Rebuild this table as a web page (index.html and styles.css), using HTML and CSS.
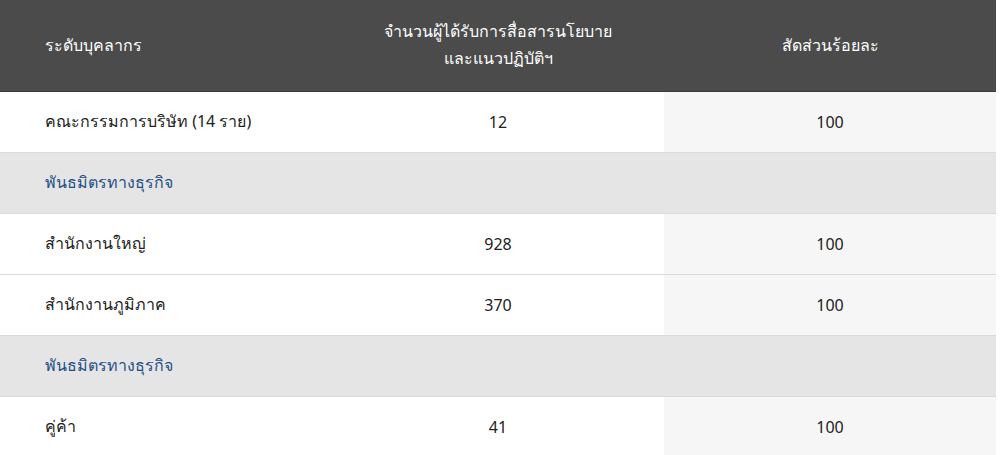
FILE: index.html
```html
<!DOCTYPE html>
<html lang="th">
<head>
<meta charset="utf-8">
<link rel="stylesheet" href="styles.css">
</head>
<body>
<table class="tbl">
  <colgroup>
    <col class="col">
    <col class="col">
    <col class="col">
  </colgroup>
  <thead>
    <tr>
      <th class="c1">ระดับบุคลากร</th>
      <th class="c2">จำนวนผู้ได้รับการสื่อสารนโยบาย<br>และแนวปฏิบัติฯ</th>
      <th class="c3">สัดส่วนร้อยละ</th>
    </tr>
  </thead>
  <tbody>
    <tr><td class="c1">คณะกรรมการบริษัท (14 ราย)</td><td class="c2">12</td><td class="c3">100</td></tr>
    <tr class="group"><td class="c1">พันธมิตรทางธุรกิจ</td><td></td><td></td></tr>
    <tr><td class="c1">สำนักงานใหญ่</td><td class="c2">928</td><td class="c3">100</td></tr>
    <tr><td class="c1">สำนักงานภูมิภาค</td><td class="c2">370</td><td class="c3">100</td></tr>
    <tr class="group"><td class="c1">พันธมิตรทางธุรกิจ</td><td></td><td></td></tr>
    <tr><td class="c1">คู่ค้า</td><td class="c2">41</td><td class="c3">100</td></tr>
  </tbody>
</table>
</body>
</html>
```
FILE: styles.css
```css
html, body {
  margin: 0;
  padding: 0;
  background: #ffffff;
}
body {
  font-family: "Noto Sans", "DejaVu Sans", sans-serif;
  font-size: 16px;
  color: #222222;
}
.tbl {
  width: 996px;
  border-collapse: collapse;
  table-layout: fixed;
}
.col {
  width: 332px;
}
.tbl th, .tbl td {
  box-sizing: border-box;
  padding: 0 0 0 45px;
  font-weight: 400;
}
.tbl .c2, .tbl .c3 {
  padding: 0;
  text-align: center;
}
.tbl thead tr {
  height: 91px;
  background: #4b4b4b;
  color: #ffffff;
  border-bottom: 1px solid #3a3a3a;
}
.tbl th {
  line-height: 27px;
}
.tbl td {
  height: 61px;
  border-bottom: 1px solid #dadada;
}
.c1 { text-align: left; }
.tbl td.c3 { background: #f6f6f6; }
.tbl tr.group td {
  background: #e5e5e5;
  color: #1e4f86;
}
```
